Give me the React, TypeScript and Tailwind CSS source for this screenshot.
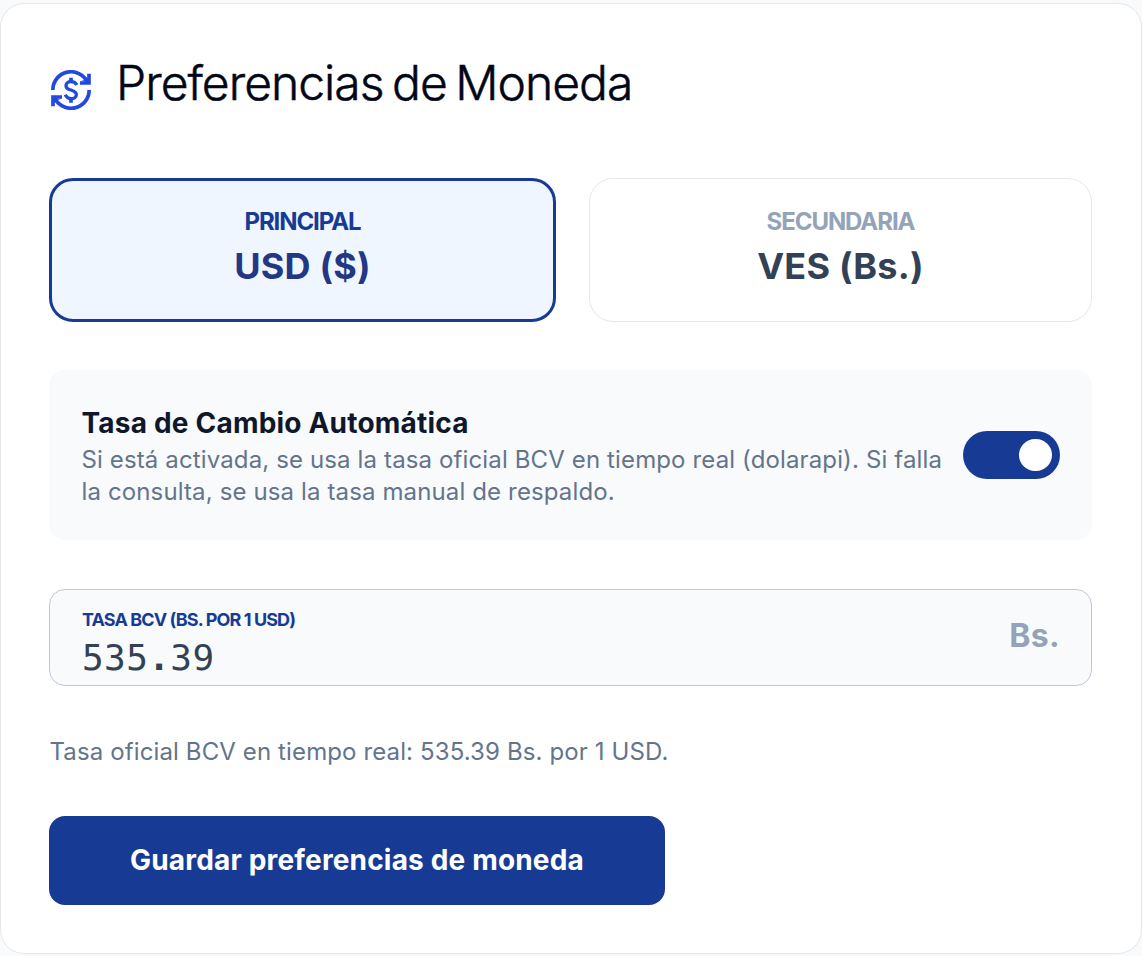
import { useState } from "react";

function CurrencyExchangeIcon() {
  return (
    <svg viewBox="33 61 120 120" className="h-10 w-10 shrink-0 text-[#2148e0]" fill="none" stroke="currentColor" strokeWidth="11" aria-hidden="true">
      <path d="M38.500 121A54.500 54.500 0 0 1 143 99" />
      <path d="M147.500 121A54.500 54.500 0 0 1 43 143" />
      <path d="M147 72V100H120" />
      <path d="M39 170V142H66" />
      <path d="M122 94.500L134 90L142 80V95Z" fill="currentColor" stroke="none" />
      <path d="M64 147.500L52 152L44 162V147Z" fill="currentColor" stroke="none" />
      <path d="M93 84V96M93 148V159" />
      <path d="M110 106C107 99 101 96 93 96C84 96 78 101 78 108C78 116 85 119 93 121C103 124 109 128 109 135C109 143 102 147 94 147C85 147 79 143 76 135" strokeWidth="10" />
    </svg>
  );
}

interface CurrencyCardProps {
  label: string;
  value: string;
  selected?: boolean;
}

function CurrencyCard({ label, value, selected = false }: CurrencyCardProps) {
  return (
    <div
      className={
        selected
          ? "flex h-36 w-[507px] flex-col items-center rounded-3xl border-3 border-[#173b95] bg-[#eff6ff] pt-[25px]"
          : "flex h-36 w-[503px] flex-col items-center rounded-3xl border border-[#e5e7eb] bg-white pt-[27px]"
      }
    >
      <span className={`text-2xl leading-8 font-bold tracking-[-0.045em] ${selected ? "text-[#173b95]" : "text-[#94a3b8]"}`}>{label}</span>
      <span className={`mt-0.5 text-4xl leading-[52px] font-bold tracking-[0.2px] ${selected ? "text-[#233784]" : "text-[#334155]"}`}>{value}</span>
    </div>
  );
}

export default function App() {
  const [automatic, setAutomatic] = useState(true);

  return (
    <div className="h-[956px] w-[1142px] bg-[#f8fafc] pt-[3px] font-['Inter',sans-serif]">
      <main className="h-[951px] rounded-3xl border border-[#e5e7eb] bg-white pt-[50px] pr-[49px] pl-12">
        <header className="flex h-[61px] items-start gap-[25px] pl-[2px]">
          <div className="pt-4">
            <CurrencyExchangeIcon />
          </div>
          <h1 className="text-5xl leading-[58px] font-light tracking-[-0.0205em] [word-spacing:-4px] text-[#020617] [-webkit-text-stroke:0.5px_#020617]">Preferencias de Moneda</h1>
        </header>

        <section className="mt-[63px] flex justify-between">
          <CurrencyCard label="PRINCIPAL" value="USD ($)" selected />
          <CurrencyCard label="SECUNDARIA" value="VES (Bs.)" />
        </section>

        <section className="mt-12 flex h-[170px] items-center justify-between rounded-2xl bg-[#f8fafc] px-8">
          <div className="w-[868px] pl-[0.5px]">
            <h2 className="text-[28px] leading-10 font-bold tracking-[0.2px] text-[#0f172a]">Tasa de Cambio Automática</h2>
            <p className="pt-px text-2xl leading-8 tracking-[0.13px] text-[#64748b]">
              Si está activada, se usa la tasa oficial BCV en tiempo real (dolarapi). Si falla
              <br />
              la consulta, se usa la tasa manual de respaldo.
            </p>
          </div>
          <button
            type="button"
            role="switch"
            aria-checked={automatic}
            aria-label="Tasa de Cambio Automática"
            onClick={() => setAutomatic(!automatic)}
            className={`flex h-12 w-[97px] shrink-0 items-center rounded-full px-2 ${automatic ? "justify-end bg-[#173b95]" : "justify-start bg-[#94a3b8]"}`}
          >
            <span className="h-8 w-[33px] rounded-full bg-white" />
          </button>
        </section>

        <section className="mt-[49px] flex h-[97px] justify-between rounded-2xl border border-[#c4c5d5] bg-[#f8fafc] pr-[31px] pl-8">
          <div className="pt-[18px]">
            <div className="text-lg leading-6 font-bold tracking-[-0.05em] text-[#173b95]">TASA BCV (BS. POR 1 USD)</div>
            <div className="pt-px font-['DejaVu_Sans_Mono',monospace] text-4xl leading-[50px] tracking-[0.4px] text-[#334155]">
              535<span className="font-bold">.</span>39
            </div>
          </div>
          <span className="pt-[22px] text-[32px] leading-[48px] font-bold tracking-[0.3px] text-[#94a3b8]">Bs.</span>
        </section>

        <p className="mt-[50px] pl-[0.5px] text-2xl leading-8 tracking-[0.12px] text-[#64748b]">Tasa oficial BCV en tiempo real: 535.39 Bs. por 1 USD.</p>

        <button type="button" className="mt-12 h-[89px] w-[616px] rounded-2xl bg-[#173b95] pb-0.5 text-[28px] leading-10 font-bold tracking-[0.17px] text-white">
          Guardar preferencias de moneda
        </button>
      </main>
    </div>
  );
}
